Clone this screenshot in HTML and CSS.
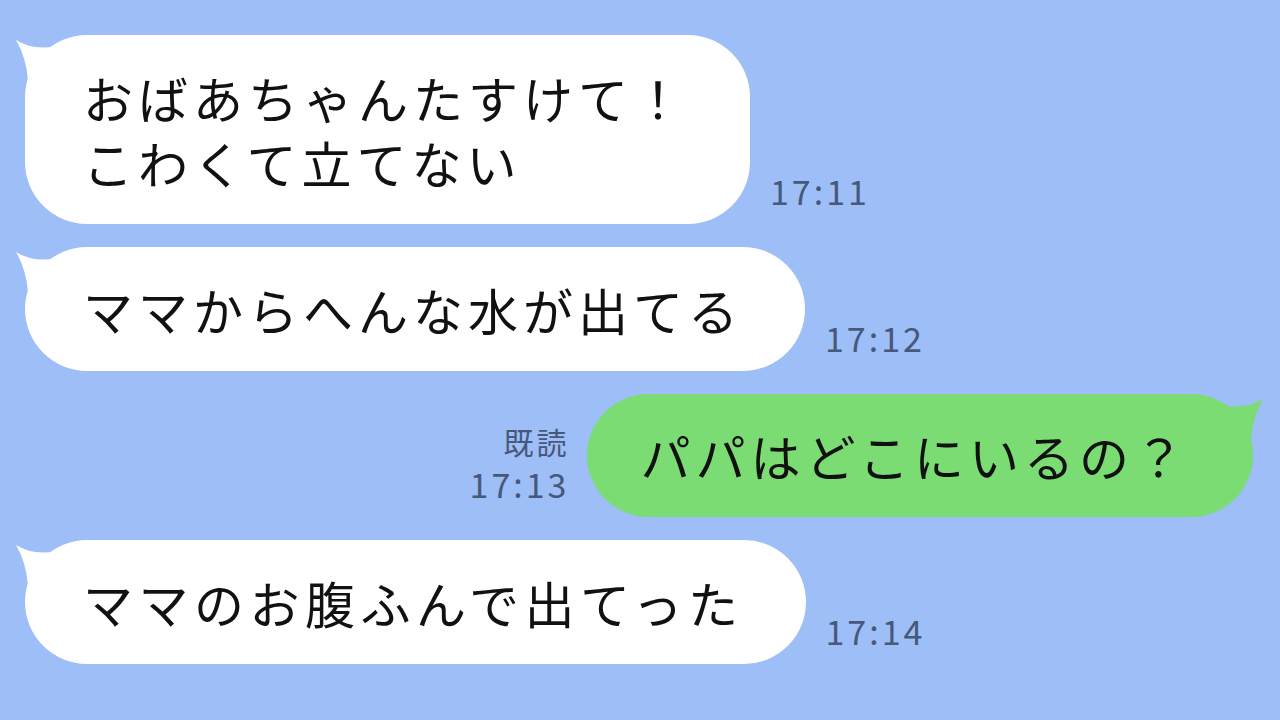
FILE: index.html
```html
<!DOCTYPE html>
<html>
<head>
<meta charset="utf-8" />
<title>トーク</title>
<link rel="stylesheet" href="styles.css">
</head>
<body>

<div class="chat">

  <div class="row">
    <div class="bubble">
      <svg class="tail" width="40" height="45" viewBox="0 0 40 45"><path d="M0 5 Q18 16 40 11 L40 45 L12 45 Q10 22 0 5 Z" /></svg>
      <p>おばあちゃんたすけて！<br>こわくて立てない</p>
    </div>
    <div class="meta">17:11</div>
  </div>

  <div class="row">
    <div class="bubble">
      <svg class="tail" width="40" height="45" viewBox="0 0 40 45"><path d="M0 5 Q18 16 40 11 L40 45 L12 45 Q10 22 0 5 Z" /></svg>
      <p>ママからへんな水が出てる</p>
    </div>
    <div class="meta">17:12</div>
  </div>

  <div class="row mine">
    <div class="meta">
      <div class="read">既読</div>
      <div>17:13</div>
    </div>
    <div class="bubble green">
      <svg class="tail" width="40" height="45" viewBox="0 0 40 45"><path d="M40 5 Q22 16 0 11 L0 45 L28 45 Q30 22 40 5 Z" /></svg>
      <p>パパはどこにいるの？</p>
    </div>
  </div>

  <div class="row">
    <div class="bubble">
      <svg class="tail" width="40" height="45" viewBox="0 0 40 45"><path d="M0 5 Q18 16 40 11 L40 45 L12 45 Q10 22 0 5 Z" /></svg>
      <p class="wide">ママのお腹ふんで出てった</p>
    </div>
    <div class="meta">17:14</div>
  </div>

</div>

</body>
</html>
```

FILE: styles.css
```css
html, body
{
    margin: 0;
    height: 100%;
}

body
{
    background-color: #9dbef6;
    font-family: "Noto Sans CJK JP", "Noto Sans", sans-serif;
    overflow: hidden;
}

.chat
{
    display: flex;
    flex-direction: column;
    gap: 23px;
    padding: 35px 27px 0 25px;
}

.row
{
    display: flex;
    align-items: flex-end;
    gap: 20px;
}

.row.mine
{
    justify-content: flex-end;
}

.bubble
{
    position: relative;
    background-color: #ffffff;
    border-radius: 62px;
    padding: 29.5px 62px 29.5px 58px;
}

.bubble.green
{
    background-color: #7bdc74;
    padding: 29px 64px 29px 54px;
}

.bubble p
{
    margin: 0;
    font-size: 50px;
    line-height: 65px;
    letter-spacing: 5px;
    color: #111111;
    white-space: nowrap;
}

.bubble p.wide
{
    letter-spacing: 5.5px;
}

.tail
{
    position: absolute;
    top: 0;
    left: -9px;
    fill: #ffffff;
}

.green .tail
{
    left: auto;
    right: -10px;
    fill: #7bdc74;
}

.meta
{
    font-size: 34px;
    line-height: 44px;
    letter-spacing: 3px;
    color: #47587a;
    margin-bottom: 11px;
}

.mine .meta
{
    text-align: right;
    margin-right: -3px;
}

.read
{
    font-size: 30px;
    line-height: 42px;
}
```
